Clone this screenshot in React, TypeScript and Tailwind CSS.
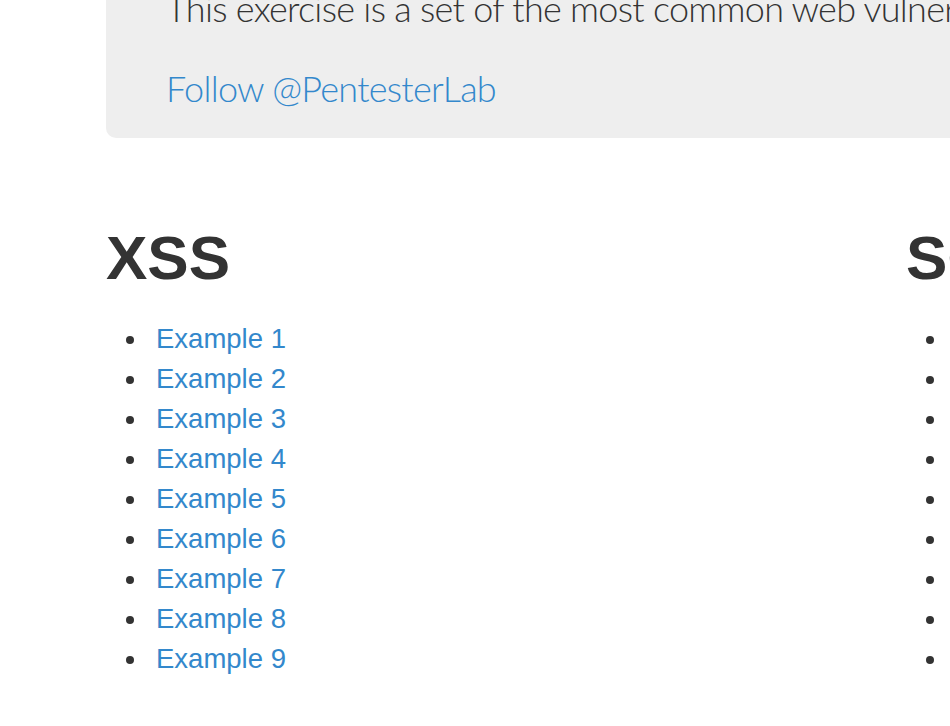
import React from 'react';

const sections = [
  { title: 'XSS', count: 9 },
  { title: 'SQL injections', count: 9 },
];

const App: React.FC = () => {
  return (
    <div className="w-[950px] h-[726px] overflow-hidden bg-white text-[#333]" style={{ fontFamily: '"Liberation Sans", Arial, sans-serif' }}>
      <div className="w-[1800px] pl-[106px] -mt-[42px]">
        <div className="bg-[#eeeeee] rounded-[10px] pl-[60px] pt-[20px] pb-[20px] mb-[60px]">
          <p
            className="text-[36px] leading-[60px] font-light tracking-[-0.02em] mb-[20px] text-[#333] whitespace-nowrap"
            style={{ fontFamily: 'Lato, "Liberation Sans", sans-serif' }}
          >
            This exercise is a set of the most common web vulnerabilities.
          </p>
          <p
            className="text-[36px] leading-[60px] font-light tracking-[-0.02em] text-[#3388cc] whitespace-nowrap"
            style={{ fontFamily: 'Lato, "Liberation Sans", sans-serif' }}
          >
            <a href="#">Follow @PentesterLab</a>
          </p>
        </div>

        <div className="grid grid-cols-[800px_800px]">
          {sections.map((s) => (
            <div key={s.title}>
              <h2 className="text-[62px] leading-[80px] font-bold my-[20px] text-[#333]">{s.title}</h2>
              <ul className="ml-[50px] mt-[21px] mb-[20px] text-[27.5px] leading-[40px]">
                {Array.from({ length: s.count }, (_, i) => (
                  <li
                    key={i}
                    className="relative before:content-[''] before:absolute before:left-[-30px] before:top-[17px] before:w-[8px] before:h-[8px] before:rounded-full before:bg-[#333]"
                  >
                    <a href="#" className="text-[#3388cc]">
                      Example {i + 1}
                    </a>
                  </li>
                ))}
              </ul>
            </div>
          ))}
        </div>
      </div>
    </div>
  );
};

export default App;
